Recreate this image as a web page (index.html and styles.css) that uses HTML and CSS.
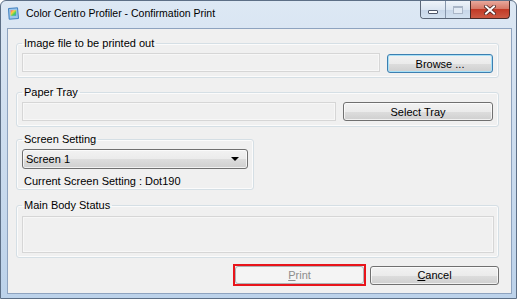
FILE: index.html
```html
<!DOCTYPE html>
<html lang="en">
<head>
    <meta charset="UTF-8">
    <title>Color Centro Profiler - Confirmation Print</title>
    <link rel="stylesheet" href="styles.css">
</head>
<body>
    <div class="window">
        <div class="titlebar">
            <svg class="app-icon" width="13" height="13" viewBox="0 0 13 13">
                <defs>
                    <linearGradient id="rainbow" x1="0" y1="0" x2="1" y2="1">
                        <stop offset="0" stop-color="#ff4f7a"/>
                        <stop offset="0.35" stop-color="#ffd23c"/>
                        <stop offset="0.65" stop-color="#4ccf5a"/>
                        <stop offset="1" stop-color="#3a8cf0"/>
                    </linearGradient>
                </defs>
                <path d="M1.5 1.5 L10.5 0.8 L11.5 11.5 L2.2 12.2 Z" fill="#9cc6ea" stroke="#3f7fbf" stroke-width="1"/>
                <rect x="3.6" y="3.2" width="5.6" height="5.6" fill="url(#rainbow)"/>
            </svg>
            <span class="title">Color Centro Profiler - Confirmation Print</span>
            <div class="caption-buttons">
                <div class="cap-group">
                    <div class="cap cap-min"><span class="glyph-min"></span></div>
                    <div class="cap cap-max"><span class="glyph-max"></span></div>
                </div>
                <div class="cap cap-close">
                    <svg width="12" height="10" viewBox="0 0 12 10">
                        <path d="M2 1.5 L10 8.5 M10 1.5 L2 8.5" stroke="#4a2320" stroke-width="3.6" stroke-linecap="square"/>
                        <path d="M2 1.5 L10 8.5 M10 1.5 L2 8.5" stroke="#fff" stroke-width="2" stroke-linecap="square"/>
                    </svg>
                </div>
            </div>
        </div>

        <div class="client">
            <fieldset class="group group-image">
                <legend>Image file to be printed out</legend>
                <div class="row">
                    <div class="field"></div>
                    <button class="btn btn-default btn-browse">Browse ...</button>
                </div>
            </fieldset>

            <fieldset class="group group-tray">
                <legend>Paper Tray</legend>
                <div class="row">
                    <div class="field"></div>
                    <button class="btn btn-tray">Select Tray</button>
                </div>
            </fieldset>

            <fieldset class="group group-screen">
                <legend>Screen Setting</legend>
                <div class="dropdown">
                    <span>Screen 1</span>
                    <span class="arrow"></span>
                </div>
                <div class="current">Current Screen Setting : Dot190</div>
            </fieldset>

            <fieldset class="group group-status">
                <legend>Main Body Status</legend>
                <div class="field status-field"></div>
            </fieldset>

            <div class="actions">
                <div class="highlight">
                    <button class="btn btn-print" disabled><u>P</u>rint</button>
                </div>
                <button class="btn btn-cancel"><u>C</u>ancel</button>
            </div>
        </div>
    </div>
</body>
</html>
```

FILE: styles.css
```css
* {
    margin: 0;
    padding: 0;
    box-sizing: border-box;
}

body {
    font-family: "Liberation Sans", Arial, sans-serif;
    font-size: 11px;
    color: #000;
    background: #fff;
}

.window {
    width: 517px;
    height: 299px;
    border: 1px solid #5d6f86;
    border-radius: 6px 6px 0 0;
    background: linear-gradient(to bottom, #dde8f4 0%, #cfdeef 40%, #bcd2ea 100%);
    display: flex;
    flex-direction: column;
}

/* title bar */
.titlebar {
    height: 27px;
    display: flex;
    align-items: flex-start;
}

.app-icon {
    margin: 6px 0 0 6px;
    flex-shrink: 0;
}

.title {
    margin: 5px 0 0 6px;
    font-size: 10.5px;
    line-height: 14px;
    color: #000;
    flex: 1;
}

.caption-buttons {
    display: flex;
    margin-right: 6px;
    height: 18px;
}

.cap-group {
    display: flex;
    border: 1px solid #5b6778;
    border-top: none;
    border-right: none;
    border-radius: 0 0 0 4px;
    overflow: hidden;
}

.cap {
    height: 17px;
    display: flex;
    align-items: center;
    justify-content: center;
}

.cap-min {
    width: 25px;
    background: linear-gradient(to bottom, #eef3f9 0%, #dbe5f1 50%, #c7d6e8 51%, #d3e1f0 100%);
    border-right: 1px solid #8796ab;
}

.cap-max {
    width: 24px;
    background: linear-gradient(to bottom, #eef3f9 0%, #dbe5f1 50%, #c7d6e8 51%, #d3e1f0 100%);
}

.glyph-min {
    width: 10px;
    height: 4px;
    margin-top: 5px;
    background: #fff;
    border: 1px solid #4d5668;
    border-radius: 1px;
}

.glyph-max {
    width: 10px;
    height: 8px;
    border: 1px solid #aab6c7;
    border-top-width: 2px;
    background: #e2eaf4;
}

.cap-close {
    width: 40px;
    height: 18px;
    border: 1px solid #4a2a27;
    border-top: none;
    border-radius: 0 0 4px 0;
    background: linear-gradient(to bottom, #e8a89c 0%, #d77a68 45%, #c23a26 50%, #cc5a44 100%);
}

/* client area */
.client {
    flex: 1;
    margin: 0 4px 4px 6px;
    border: 1px solid #8ea3bf;
    background: #f0f0f0;
    padding: 7px 12px 0 8px;
    display: flex;
    flex-direction: column;
}

.group {
    border: 1px solid #d5dfe5;
    border-radius: 3px;
    box-shadow: inset 0 0 0 1px #fbfbfb;
    padding: 3px 5px 4px;
    min-width: 0;
}

.group legend {
    padding: 0 2px;
    line-height: 14px;
    color: #000;
}

.group-tray {
    margin-top: 7px;
    padding-bottom: 5px;
}

.group-screen {
    margin-top: 5px;
    width: 238px;
    padding-bottom: 1px;
}

.group-status {
    margin-top: 8px;
    padding: 4px 4px 4px 5px;
}

.row {
    display: flex;
    gap: 7px;
}

.field {
    flex: 1;
    height: 19px;
    border: 1px solid #d6d6d6;
    background: #f0f0f0;
    box-shadow: inset 0 0 0 1px #f7f7f7;
}

.status-field {
    height: 37px;
}

/* buttons */
.btn {
    font-family: inherit;
    font-size: 11px;
    color: #000;
    height: 19px;
    border: 1px solid #707070;
    border-radius: 3px;
    background: linear-gradient(to bottom, #f2f2f2 0%, #ebebeb 50%, #dddddd 51%, #cfcfcf 100%);
    box-shadow: inset 0 0 0 1px rgba(255, 255, 255, 0.7);
}

.btn u {
    text-decoration: underline;
}

.btn-default {
    border-color: #3c7fb1;
    box-shadow: inset 0 0 0 1px #a8e0f6;
}

.btn-browse {
    width: 106px;
    margin-top: 1px;
}

.btn-tray {
    width: 150px;
}

.dropdown {
    height: 20px;
    border: 1px solid #707070;
    border-radius: 3px;
    background: linear-gradient(to bottom, #f2f2f2 0%, #ebebeb 50%, #dddddd 51%, #cfcfcf 100%);
    box-shadow: inset 0 0 0 1px rgba(255, 255, 255, 0.7);
    display: flex;
    align-items: center;
    justify-content: space-between;
    padding: 0 8px 0 3px;
}

.arrow {
    width: 0;
    height: 0;
    border-left: 4px solid transparent;
    border-right: 4px solid transparent;
    border-top: 4px solid #000;
}

.current {
    margin-top: 5px;
    padding-left: 2px;
    line-height: 14px;
}

.actions {
    display: flex;
    justify-content: flex-end;
    align-items: center;
    gap: 4px;
    margin-top: 6px;
}

.highlight {
    display: flex;
    border: 2px solid #e8141b;
}

.btn-print {
    width: 129px;
    height: 18px;
    color: #8d8d8d;
    background: #f4f4f4;
    border-color: #adb2b5;
    box-shadow: none;
}

.btn-cancel {
    width: 129px;
}
```
